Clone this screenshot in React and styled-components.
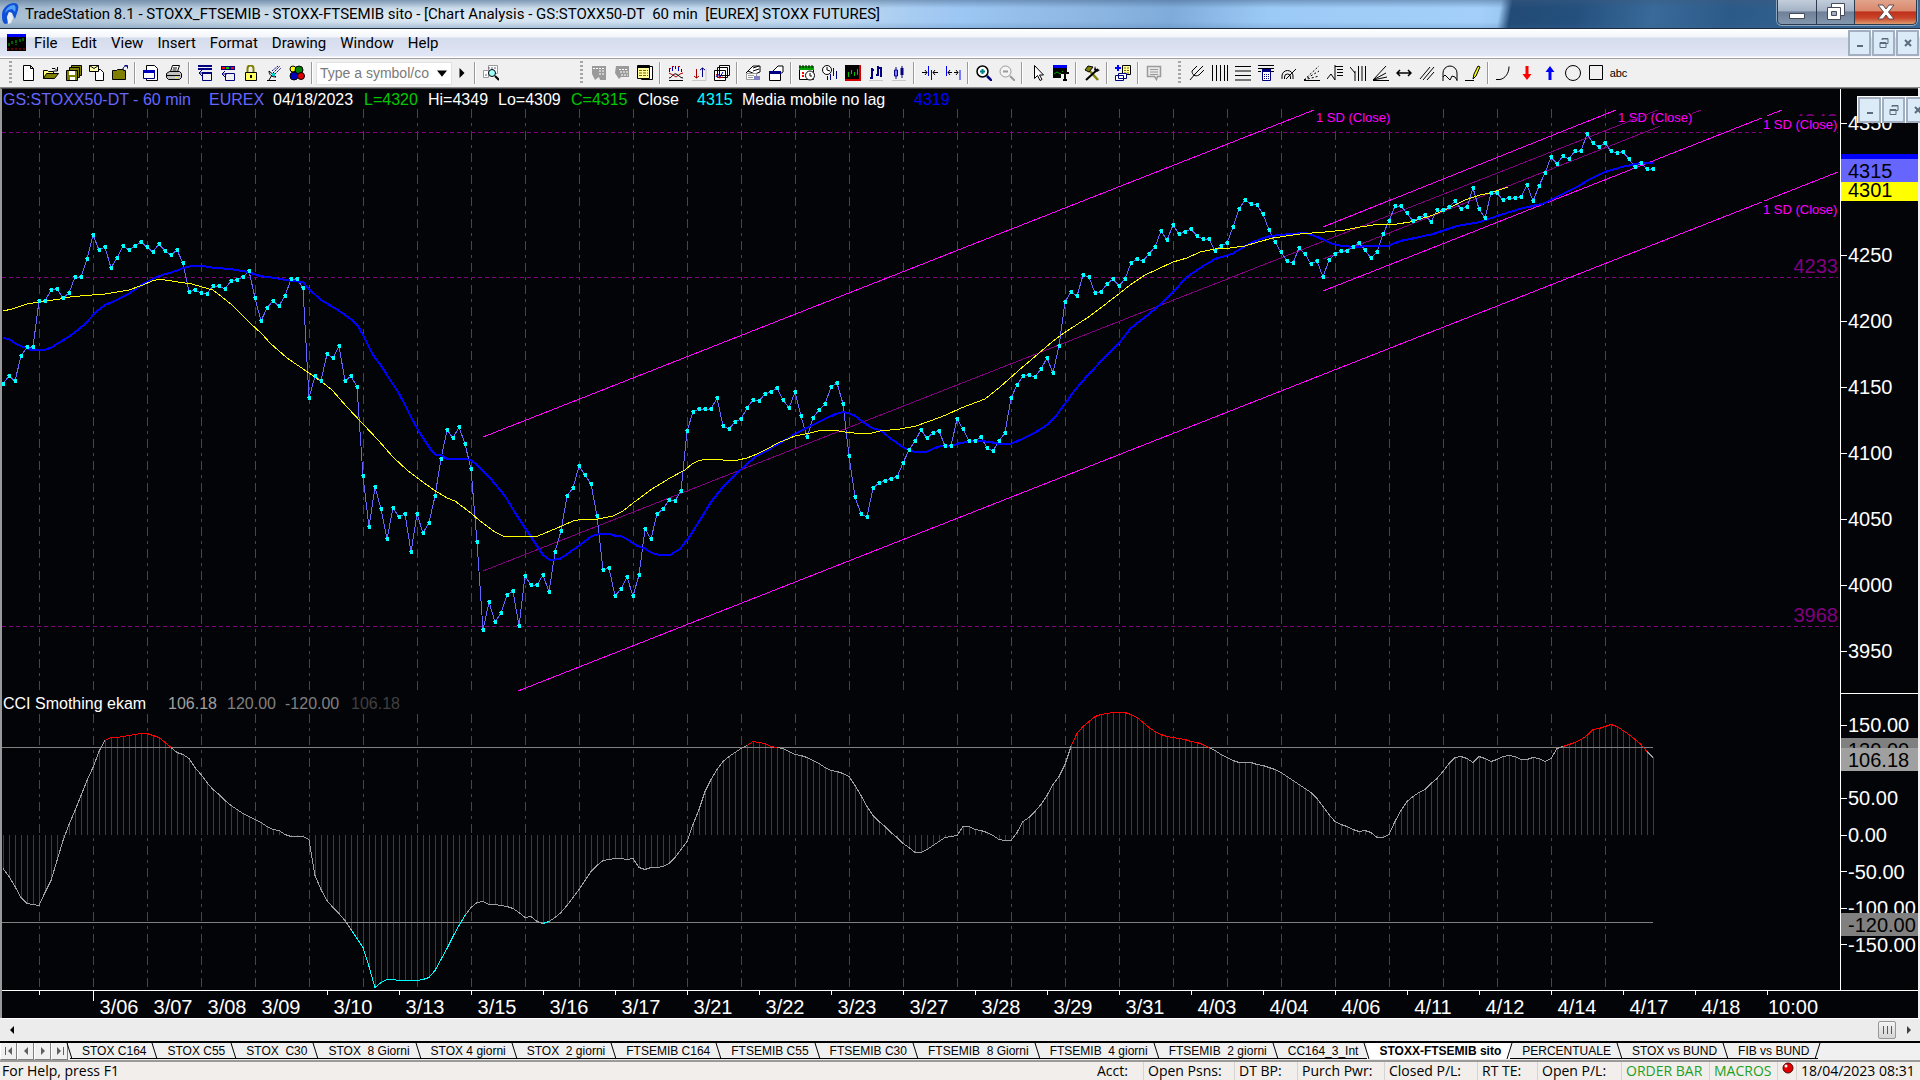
import React from "react";
import styled, { createGlobalStyle, css } from "styled-components";

const SANS = '"Liberation Sans", Arial, sans-serif';
const UI = '"Open Sans", "Segoe UI", sans-serif';
const CAPTION = 'Roboto, "Segoe UI", sans-serif';

const GlobalStyle = createGlobalStyle`
  *, *::before, *::after { box-sizing: border-box; }
  body { margin: 0; background: #f0f0f0; font-family: ${UI}; color: #000; }
  button, input { font: inherit; color: inherit; margin: 0; padding: 0; border: 0; background: none; border-radius: 0; }
  a { color: inherit; text-decoration: none; }
`;

/* ---------- window frame ---------- */

const Window = styled.div`
  min-height: 100vh;
  display: flex;
  flex-direction: column;
  overflow: hidden;
`;

const TitleBar = styled.header`
  height: 29px;
  display: flex;
  align-items: center;
  border-bottom: 1px solid #1d2b3c;
  background:
    linear-gradient(180deg, rgba(60, 90, 125, 0.45) 0, rgba(255, 255, 255, 0) 8px, rgba(255, 255, 255, 0) 22px, rgba(60, 100, 150, 0.2) 28px),
    radial-gradient(ellipse 460px 18px at 23% 60%, rgba(235, 243, 250, 0.85), rgba(235, 243, 250, 0)),
    linear-gradient(100deg, #a3bacf 0, #b4cbe0 26%, #b9d5ef 44%, #9cc6f3 50%, #8fb8e4 56%, #7fabda 61%, #9ccaf6 66%, #a3cffa 77%, #9cc8f4 78%, #224b76 78.6%, #24507e 82%, #396a9a 86%, #2c5a88 90%, #3d6a96 100%);
`;

const AppMark = styled.svg`
  width: 18px;
  height: 22px;
  margin-left: 1px;
  flex: none;
`;

const Title = styled.h1`
  margin: 0 auto 0 6px;
  font-family: ${CAPTION};
  font-size: 15px;
  font-weight: 400;
  line-height: 20px;
  white-space: pre;
`;

const FrameButtons = styled.div`
  align-self: flex-start;
  display: flex;
  margin-right: 3px;
  height: 25px;
  border: 1px solid #2a3b50;
  border-top: 0;
  border-radius: 0 0 5px 5px;
  overflow: hidden;
  box-shadow: 0 0 0 1px rgba(255, 255, 255, 0.45);
`;

const FrameButton = styled.button`
  width: ${(p) => (p.$close ? 62 : 38)}px;
  display: grid;
  place-items: center;
  border-left: ${(p) => (p.$first ? "0" : "1px solid #2a3b50")};
  background: ${(p) =>
    p.$close
      ? "linear-gradient(180deg, #e2a48c 0, #d9896c 45%, #c0301a 50%, #c9452a 75%, #dc9a6e 100%)"
      : "linear-gradient(180deg, #c3cedb 0, #a4b3c5 45%, #6f8098 50%, #8497ad 100%)"};
`;

const MenuBar = styled.nav`
  height: 30px;
  display: flex;
  align-items: center;
  padding: 0 1px 2px 7px;
  border-bottom: 1px solid #a0a0a0;
  background: linear-gradient(180deg, #ffffff 0, #f3f5fb 8px, #d5dcec 9px, #dce2f2 20px, #e2e7f6 27px, #fff 28px);
`;

const MenuItem = styled.button`
  padding: 0 7px;
  font-family: ${CAPTION};
  font-size: 15px;
  line-height: 22px;
`;

const MenuList = styled.div`
  display: flex;
  margin: 0 auto 0 1px;
`;

const MdiButtons = styled.div`
  display: flex;
  gap: 1px;
  ${(p) =>
    p.$floating &&
    css`
      position: absolute;
      top: 7px;
      left: 16px;
      padding: 1px 0 0 1px;
      background: #fff;
      z-index: 2;
    `}
`;

const MdiButton = styled.button`
  width: 23px;
  height: 26px;
  flex: none;
  display: grid;
  place-items: center;
  border: 2px solid #a3afc0;
  background: #dcebf8;
  color: #5b6b7b;
`;

/* ---------- toolbar ---------- */

const ToolBar = styled.div`
  height: 29px;
  display: flex;
  align-items: center;
  background: #f0f0f0;
  border-bottom: 1px solid #8a8a8a;
  overflow: hidden;
`;

const ToolGroup = styled.div`
  display: flex;
  align-items: center;
  flex: none;
  width: ${(p) => (p.$width ? p.$width + "px" : "auto")};
`;

const Grip = styled.span`
  width: 3px;
  height: 24px;
  margin: 0 4px 0 9px;
  background: repeating-linear-gradient(180deg, #a6a6a6 0 2px, transparent 2px 4px);
`;

const ToolButton = styled.button`
  width: 23px;
  height: 24px;
  display: grid;
  place-items: center;
  flex: none;
  svg { display: block; }
`;

const Divider = styled.span`
  width: 8px;
  height: 22px;
  flex: none;
  background: linear-gradient(90deg, transparent 3px, #9a9a9a 3px 4px, #fff 4px 5px, transparent 5px);
`;

const SymbolBox = styled.div`
  display: flex;
  align-items: center;
  width: 136px;
  height: 23px;
  padding-left: 3px;
  background: #fff;
  border: 1px solid #e2e2e2;
`;

const SymbolInput = styled.input`
  flex: 1;
  min-width: 0;
  height: 20px;
  font-family: ${SANS};
  font-size: 14px;
  outline: 0;
  &::placeholder { color: #7a7a7a; opacity: 1; }
`;

const ArrowButton = styled.button`
  width: 19px;
  height: 20px;
  display: grid;
  place-items: center;
`;

/* ---------- chart ---------- */

const ChartWindow = styled.main`
  position: relative;
  margin-right: 2px;
  border-left: 2px solid #9a9a9a;
  border-top: 1px solid #404040;
  background: #030408;
  font-family: ${SANS};
  color: #fff;
`;

const Pane = styled.section`
  position: relative;
  display: grid;
  grid-template-columns: minmax(0, 1fr) 78px;
`;

const Plot = styled.svg`
  display: block;
  width: 100%;
  height: auto;
  text { font-family: ${SANS}; }
`;

const Legend = styled.div`
  position: absolute;
  top: ${(p) => p.$top}px;
  left: 1px;
  display: grid;
  grid-template-columns: ${(p) => p.$columns};
  font-size: 16px;
  line-height: 20px;
  white-space: pre;
`;

const LegendItem = styled.span`
  color: ${(p) => p.$color};
`;

const Scale = styled.div`
  position: relative;
  display: flex;
  flex-direction: column;
  border-left: 1px solid #fff;
  border-top: ${(p) => (p.$ruled ? "1px solid #fff" : "0")};
  padding: ${(p) => p.$padding};
`;

const ScaleRow = styled.div`
  flex: 1;
  display: flex;
  align-items: center;
  font-size: 20px;
  line-height: 22px;
  white-space: nowrap;
  &::before {
    content: "";
    width: 6px;
    height: 1px;
    margin-right: 1px;
    background: #fff;
  }
`;

const PriceTag = styled.output`
  position: absolute;
  left: 0;
  right: 0;
  top: ${(p) => p.$top}px;
  height: 23px;
  padding-left: 7px;
  font-size: 20px;
  line-height: 24px;
  color: #000;
  white-space: nowrap;
  background: ${(p) => p.$color};
`;

/* ---------- bottom bars ---------- */

const ScrollTrack = styled.div`
  height: 23px;
  display: flex;
  align-items: center;
  justify-content: space-between;
  padding: 0 2px;
  border-top: 1px solid #fff;
  background: #ececec;
`;

const ScrollEnd = styled.div`
  display: flex;
  align-items: center;
  gap: 3px;
`;

const Thumb = styled.span`
  width: 18px;
  height: 18px;
  border: 1px solid #979797;
  border-radius: 2px;
  background: repeating-linear-gradient(90deg, #5a5a5a 0 1px, transparent 1px 4px) 4px 4px / 9px 8px no-repeat,
    linear-gradient(180deg, #f4f4f4, #d4d4d4);
`;

const TabStrip = styled.nav`
  height: 19px;
  display: flex;
  align-items: stretch;
  border-top: 2px solid #000;
  background: #f0f0f0;
`;

const TabNavGroup = styled.div`
  display: flex;
  padding-right: 2px;
`;

const TabNav = styled.button`
  width: 17px;
  display: grid;
  place-items: center;
  border-right: 1px solid #808080;
  border-bottom: 1px solid #808080;
  border-left: 1px solid #fff;
`;

const Tab = styled.button`
  height: 16px;
  padding: 0 9px 0 12px;
  font-family: ${SANS};
  font-size: 12px;
  line-height: 14px;
  font-weight: ${(p) => (p.$active ? 700 : 400)};
  white-space: pre;
  background: ${(p) => (p.$active ? "#fff" : "#f0f0f0")};
  border-bottom: 1px solid ${(p) => (p.$active ? "#fff" : "#000")};
`;

const TabEdge = styled.svg`
  width: 7px;
  height: 17px;
  margin: 0 -3px 0 -4px;
  z-index: 1;
  flex: none;
`;

const StatusBar = styled.footer`
  height: 20px;
  display: flex;
  align-items: stretch;
  border-top: 2px solid #9a9a9a;
  background: #f1eeec;
  font-size: 14px;
  line-height: 18px;
  white-space: nowrap;
`;

const StatusText = styled.span`
  margin-right: auto;
  padding-left: 2px;
`;

const StatusCell = styled.span`
  width: ${(p) => p.$width}px;
  padding-left: 4px;
  border-left: 1px solid ${(p) => (p.$open ? "transparent" : "#d6d3d0")};
  color: ${(p) => (p.$green ? "#1fa01f" : "#000")};
`;

const TaskEdge = styled.div`
  min-height: 2px;
  flex: 1;
  background: linear-gradient(90deg, #c3cbe0 0 212px, #3b2c48 212px 628px, #c3cbe0 628px);
`;

/* ---------- series ---------- */

const CLOSES = [
  384, 376, 381, 356, 347, 347, 301, 301, 290, 289, 298, 293, 277, 277, 259, 235, 250, 247, 268, 258, 246, 250, 246, 242,
  247, 252, 244, 251, 255, 250, 263, 292, 290, 293, 294, 286, 286, 289, 281, 280, 277, 271, 298, 321, 308, 301, 306, 296,
  279, 279, 288, 398, 376, 381, 354, 358, 346, 381, 376, 387, 476, 527, 487, 509, 539, 508, 517, 514, 552, 514, 533, 523,
  496, 459, 430, 438, 427, 444, 469, 542, 630, 602, 622, 613, 595, 591, 626, 576, 585, 585, 575, 592, 552, 531, 496, 488,
  466, 475, 484, 516, 570, 568, 596, 589, 577, 596, 575, 529, 539, 514, 509, 500, 501, 491, 431, 412, 409, 409, 409, 398,
  426, 429, 422, 419, 408, 400, 401, 394, 392, 388, 400, 408, 392, 416, 437, 418, 410, 404, 387, 383, 404, 456, 497, 514,
  517, 488, 483, 481, 479, 477, 463, 450, 441, 430, 438, 433, 431, 446, 446, 419, 429, 441, 441, 437, 448, 451, 441, 433,
  398, 385, 376, 375, 377, 369, 358, 373, 346, 302, 292, 296, 275, 277, 293, 292, 284, 279, 286, 279, 263, 259, 261, 254,
  247, 231, 240, 225, 234, 232, 229, 236, 239, 239, 251, 246, 243, 227, 209, 200, 204, 205, 214, 230, 242, 252, 261, 263,
  248, 254, 264, 261, 277, 260, 254, 251, 251, 247, 243, 250, 258, 252, 234, 221, 206, 206, 213, 221, 218, 215, 222, 210,
  210, 207, 201, 209, 207, 188, 209, 218, 193, 193, 200, 198, 198, 197, 185, 201, 186, 173, 157, 164, 156, 159, 151, 151,
  134, 143, 147, 143, 151, 153, 152, 159, 167, 163, 169, 169,
];

const FAST_AVERAGE =
  "3,338 9,339 16,344 26,348 32,350 45,350 52,347 70,336 84,325 97,311 105,305 117,300 130,293 143,284 159,276 176,271 186,267 192,266 203,266 215,268 230,269 248,272 260,276 275,278 292,281 303,282 309,289 321,300 338,310 352,320 358,326 363,335 373,355 382,367 390,380 397,390 404,403 411,417 418,430 425,441 431,450 436,455 441,455 447,459 465,459 471,460 477,465 490,478 505,496 514,511 525,528 535,543 543,555 550,560 560,559 570,552 580,545 592,536 600,534 610,534 616,536 621,536 627,539 637,546 644,548 652,553 660,555 670,555 680,549 690,536 700,520 711,502 722,488 737,473 755,457 775,446 795,434 813,425 827,418 838,413 844,412 854,415 863,422 872,428 880,430 890,438 904,448 914,452 926,452 940,446 952,446 960,443 975,441 981,441 990,442 1000,444 1011,444 1022,439 1036,432 1047,425 1056,416 1064,405 1075,390 1088,375 1105,357 1119,343 1131,328 1144,318 1162,303 1173,292 1187,277 1200,268 1215,259 1232,254 1247,245 1258,240 1270,236 1290,234 1305,233 1315,236 1324,240 1330,243 1342,246 1355,247 1370,246 1388,246 1400,241 1415,238 1433,234 1445,230 1457,226 1480,222 1500,215 1520,209 1545,203 1563,194 1577,187 1590,179 1605,172 1622,167 1640,163 1653,163";

const SLOW_AVERAGE =
  "3,311 12,309 27,304 40,302 60,299 70,297 80,296 105,294 129,290 143,285 152,281 160,279 165,280 178,282 192,284 209,289 213,290 222,297 232,305 250,323 262,334 270,343 287,358 309,373 322,382 332,390 347,407 363,424 378,440 393,457 407,470 420,480 434,490 447,498 455,501 463,507 471,513 480,521 495,532 503,536 525,537 538,536 550,531 562,526 573,521 583,519 598,519 613,516 623,511 633,503 652,489 670,478 685,470 692,464 698,461 706,459 715,459 723,460 738,460 747,458 757,454 767,449 778,443 795,436 810,433 822,430 832,430 845,432 863,434 872,433 880,431 900,429 916,426 930,421 946,415 961,408 985,399 1000,387 1018,371 1052,342 1064,333 1090,316 1107,303 1120,293 1130,285 1145,275 1158,269 1173,262 1187,258 1200,252 1215,249 1230,248 1245,246 1258,242 1273,238 1300,234 1325,232 1345,230 1360,227 1380,224 1397,224 1410,222 1420,219 1433,215 1445,210 1455,205 1465,200 1480,195 1490,193 1508,187";

const CCI_MARCH = [
  [5, 565], [18, 597], [35, 653], [45, 670], [64, 676], [70, 650], [84, 597], [100, 495], [113, 430], [125, 380], [140, 308],
  [153, 256], [162, 212], [172, 178], [182, 170], [202, 169], [212, 163], [222, 162], [234, 157], [245, 162], [260, 171],
  [270, 186], [280, 202], [290, 217], [300, 223], [309, 235], [318, 260], [330, 285], [345, 322], [358, 344], [380, 378],
  [400, 403], [418, 417], [440, 444], [455, 450], [465, 461], [475, 469], [495, 468], [505, 476], [515, 592], [525, 630],
  [535, 664], [555, 700], [567, 727], [575, 752], [585, 780], [594, 803], [613, 925], [623, 904], [633, 895], [652, 901],
  [682, 901], [702, 890], [712, 868], [722, 832], [740, 768], [757, 710], [770, 680], [778, 668], [788, 661], [798, 672],
  [815, 674], [832, 681], [845, 690], [858, 712], [868, 708], [878, 724], [888, 728], [898, 723], [920, 692], [945, 628],
  [968, 565], [985, 539], [1003, 535], [1020, 535], [1025, 539], [1035, 535], [1045, 565], [1055, 566], [1062, 562],
  [1078, 562], [1095, 547], [1110, 512], [1123, 480], [1130, 440], [1140, 395], [1152, 330], [1165, 285], [1180, 244],
  [1192, 225], [1203, 212], [1218, 198], [1232, 181], [1245, 187], [1258, 196], [1270, 201], [1280, 206], [1297, 220],
  [1315, 227], [1335, 248], [1360, 271], [1375, 277], [1387, 287], [1397, 315], [1408, 350], [1417, 382], [1427, 408],
  [1445, 436], [1460, 463], [1475, 490], [1485, 502], [1495, 516], [1505, 517], [1515, 505], [1530, 486], [1545, 468], [1562, 468],
];

const CCI_APRIL = [
  [0, 455], [5, 439], [15, 438], [25, 447], [40, 452], [50, 461], [62, 475], [72, 481], [84, 481], [93, 455], [103, 424],
  [115, 407], [133, 370], [143, 343], [153, 308], [163, 284], [172, 250], [181, 198], [192, 155], [205, 130], [222, 105],
  [245, 97], [275, 97], [285, 106], [300, 128], [315, 150], [335, 168], [350, 172], [365, 177], [378, 184], [390, 185],
  [400, 196], [415, 207], [430, 225], [445, 238], [457, 246], [475, 247], [500, 258], [515, 267], [530, 283], [550, 307],
  [575, 338], [590, 370], [600, 395], [613, 424], [630, 437], [652, 454], [663, 451], [672, 457], [682, 472], [692, 472],
  [701, 461], [715, 405], [731, 360], [742, 345], [757, 330], [780, 293], [795, 258], [809, 229], [820, 229], [830, 236],
  [838, 246], [848, 227], [858, 235], [868, 244], [888, 227], [903, 226], [917, 238], [927, 238], [937, 231], [948, 236],
  [957, 244], [967, 231], [976, 201], [990, 194], [1003, 187], [1017, 175], [1035, 146], [1045, 142], [1055, 139],
  [1065, 130], [1075, 139], [1095, 166], [1110, 188], [1122, 213], [1133, 232],
];

const barX = (i) => 3 + 6 * i;
const place = (points, start) => points.map(([x, y]) => [start + (x * 960) / 1568, 680 + y / 3]);
const CCI_PATH = [...place(CCI_MARCH, 0), ...place(CCI_APRIL, 960)];

const cciAt = (x) => {
  const next = CCI_PATH.findIndex((p) => p[0] >= x);
  if (next < 1) return CCI_PATH[next === 0 ? 0 : CCI_PATH.length - 1][1];
  const [x0, y0] = CCI_PATH[next - 1];
  const [x1, y1] = CCI_PATH[next];
  return y0 + ((x - x0) / (x1 - x0)) * (y1 - y0);
};

const CCI = CLOSES.map((_, i) => Math.round(cciAt(barX(i))));
const UPPER = 747;
const LOWER = 922;
const ZERO = 835;
const SESSIONS = Array.from({ length: 30 }, (_, i) => 39 + 54 * i);

const cciColor = (y) => (y < UPPER ? "#ff0000" : y > LOWER ? "#00ffff" : "#a0a0a0");

const SessionLines = ({ top, bottom }) => (
  <g stroke="#464648" strokeWidth="1" strokeDasharray="9 5 3 5">
    {SESSIONS.map((x) => (
      <line key={x} x1={x + 0.5} x2={x + 0.5} y1={top} y2={bottom} />
    ))}
  </g>
);

const DeviationLabel = ({ x, y }) => (
  <g>
    <rect x={x - 1} y={y - 14} width="75" height="17" fill="#030408" />
    <text x={x} y={y - 1} fontSize="13" fill="#ff00ff">1 SD (Close)</text>
  </g>
);

const PricePlot = () => (
  <Plot viewBox="2 89 1838 604" role="img" aria-label="GS:STOXX50-DT 60 min price">
    <g shapeRendering="crispEdges" fill="none">
      <SessionLines top={109} bottom={693} />
      <g stroke="#800080" strokeDasharray="4 3">
        <line x1="2" y1="132.5" x2="1838" y2="132.5" />
        <line x1="2" y1="277.5" x2="1838" y2="277.5" />
        <line x1="2" y1="626.5" x2="1838" y2="626.5" />
      </g>
      <line x1="1323" y1="259" x2="1701" y2="110" stroke="#800080" />
    </g>
    <g fill="#800080" fontSize="20" textAnchor="end">
      <text x="1838" y="128">4343</text>
      <text x="1838" y="273">4233</text>
      <text x="1838" y="622">3968</text>
    </g>
    <g shapeRendering="crispEdges" fill="none" stroke="#ff00ff">
      <line x1="483" y1="437" x2="1314" y2="110" />
      <line x1="518" y1="691" x2="1838" y2="172" />
      <line x1="1323" y1="227" x2="1616" y2="110" />
      <line x1="1323" y1="291" x2="1782" y2="110" />
    </g>
    <DeviationLabel x={1316} y={123} />
    <DeviationLabel x={1618} y={123} />
    <DeviationLabel x={1763} y={130} />
    <DeviationLabel x={1763} y={215} />
    <g shapeRendering="crispEdges" fill="none">
      <line x1="483" y1="571" x2="1658" y2="110" stroke="#800080" />
      <polyline points={CLOSES.map((y, i) => `${barX(i)},${y}`).join(" ")} stroke="#6666ff" />
      <polyline points={FAST_AVERAGE} stroke="#0000ff" strokeWidth="2" />
      <polyline points={SLOW_AVERAGE} stroke="#ffff00" />
      <path fill="#00ffff" d={CLOSES.map((y, i) => `M${barX(i) - 1} ${y - 2}h3v4h-3v-2h-1v-1h1z`).join("")} />
    </g>
  </Plot>
);

const CciPlot = () => (
  <Plot viewBox="2 693 1838 297" role="img" aria-label="CCI Smothing ekam">
    <g shapeRendering="crispEdges" fill="none">
      <SessionLines top={714} bottom={988} />
      <path stroke="#3c3c3e" d={CCI.map((y, i) => `M${barX(i) + 0.5} ${ZERO}V${y}`).join("")} />
      <path stroke="#808080" d={`M2 ${UPPER + 0.5}H1653M2 ${LOWER + 0.5}H1653`} />
      {CCI.slice(0, -1).map((y, i) => (
        <line key={i} x1={barX(i)} y1={y + 0.5} x2={barX(i + 1)} y2={CCI[i + 1] + 0.5} stroke={cciColor(y)} />
      ))}
    </g>
  </Plot>
);

const DAYS = [
  [93, "3/06"], [147, "3/07"], [201, "3/08"], [255, "3/09"],
  ...["3/10", "3/13", "3/15", "3/16", "3/17", "3/21", "3/22", "3/23", "3/27", "3/28", "3/29", "3/31", "4/03", "4/04", "4/06", "4/11", "4/12", "4/14", "4/17", "4/18", "10:00"].map(
    (label, i) => [327 + 72 * i, label]
  ),
];

const TimePlot = () => (
  <Plot viewBox="2 990 1916 28" role="img" aria-label="Dates">
    <g shapeRendering="crispEdges" fill="#fff">
      <rect x="2" y="990" width="1916" height="1" />
      <rect x="39" y="990" width="1" height="5" />
      <rect x="93" y="990" width="1" height="11" />
      {DAYS.slice(4).map(([x]) => (
        <rect key={x} x={x} y="990" width="1" height="5" />
      ))}
    </g>
    <g fill="#fff" fontSize="20" textAnchor="middle">
      {DAYS.map(([x, label]) => (
        <text key={x} x={x + 26} y="1014">{label}</text>
      ))}
    </g>
  </Plot>
);

/* ---------- icons ---------- */

const K = "#000";
const N = "#000080";
const G = "#9a9a9a";

const ICONS = {
  new: <path d="M3.5.5h7l3 3v12h-10zM10.5.5v3h3" fill="#fff" stroke={K} />,
  open: <><path d="M.5 13.5v-8h4l1 1h5v3" fill="#ffff80" stroke={K} /><path d="M.5 13.5l3-5h12l-4 5z" fill="#808000" stroke={K} /><path d="M9 3.5h3l2 2M14.5 2v4h-4" fill="none" stroke={K} /></>,
  saveAll: <><path d="M5.5.5h10v10h-10z" fill="#808000" stroke={K} /><path d="M3.5 2.5h10v10h-10z" fill="#808000" stroke={K} /><path d="M.5 5.5h11v10h-11z" fill="#808000" stroke={K} /><path d="M3 6h6v4H3zM4 12h5v3H4z" fill="#fff" /></>,
  mailDoc: <><path d="M6.5 4.5h5l3 3v8h-8z" fill="#fff" stroke={K} /><path d="M.5.5h9v6h-9z" fill="#ffffb0" stroke={K} /><path d="M.5.5l4.5 3 4.5-3" fill="none" stroke={K} /></>,
  closeDir: <><path d="M.5 14.5v-9h4l1-1h6v1h2v9z" fill="#808000" stroke={K} /><path d="M11 4c0-2 2-3 4-3M12.5.5h3v3" fill="none" stroke={N} /></>,
  window: <><path d="M3.5.5h8l3 3v12h-11z" fill="#fff" stroke={K} /><path d="M.5 5.5h11v8H.5z" fill="#fff" stroke={N} /><path d="M0 5h12v3H0z" fill="#0000c0" /></>,
  print: <><path d="M4.5 6.5l2-6h7l-2 6" fill="#fff" stroke={K} /><path d="M.5 8.5l3-2h10l2 2v4l-2 2h-11l-2-2z" fill="#c0c0c0" stroke={K} /><path d="M1 10.5h13M7 3h4M6.5 5h4" stroke={K} /><path d="M9 12h3v1H9z" fill="#ffff00" /></>,
  rows: <><path d="M1 1h14M1 4h14" stroke={N} strokeWidth="2" /><path d="M5.5 7.5h9v8h-9zM2 8h5M2 8l3-3M2 8l3 3" fill="none" stroke={N} /><path d="M5 7h10v2H5z" fill={N} /></>,
  rowsColor: <><path d="M1 1h14v4H1z" fill={N} /><path d="M2 2h3v2H2z" fill="#f00" /><path d="M6 2h3v2H6z" fill="#0c0" /><path d="M11 2h3v2h-3z" fill="#f00" /><path d="M5.5 8.5h9v7h-9zM2 9h5M2 9l3-3M2 9l3 3" fill="none" stroke={N} /></>,
  lock: <><path d="M4.5 7V3.5a3 3 0 0 1 6 0V7" fill="none" stroke="#808000" strokeWidth="2" /><path d="M2.5 7.5h11v8h-11z" fill="#ffff60" stroke={K} /><path d="M7 10h2v3H7z" fill={K} /></>,
  satellite: <><path d="M3 6c0 4 3 6 7 6zM1 15.5h9M3 15l3-5" fill="#e0e0e0" stroke={K} /><path d="M7 8l7-7M9 9l6-6M6 6l6-5" stroke={N} strokeDasharray="2 1" /><path d="M6 8h3v3H6z" fill="#0cc" /></>,
  balls: <><circle cx="4" cy="4" r="3" fill="#ffff00" stroke={K} /><circle cx="10" cy="5" r="4" fill="#008000" stroke={K} /><circle cx="5" cy="11" r="4" fill="#0000c0" stroke={K} /><circle cx="12" cy="11" r="3.5" fill="#e00000" stroke={K} /></>,
  find: <><path d="M.5 5.5h5v7h-5zM5.5.5h9v8h-9z" fill="#fff" stroke={G} /><path d="M5 3h9M2 10h3" stroke="#606080" strokeDasharray="2 1" /><circle cx="9" cy="8" r="3.5" fill="#a0ffff" stroke={K} /><path d="M12 11l4 4" stroke={K} strokeWidth="2" /></>,
  grayMoney: <><path d="M1 1h14v14H9l-1-3-4 3-3-6z" fill={G} /><path d="M2 3.5h11M8 6h5M8 9h5" stroke="#fff" strokeDasharray="2 1" /></>,
  grayTable: <><path d="M2 1h13v11H7l-2 2-4-6z" fill={G} /><path d="M5 4.5h9M6 7h8M7 10h7" stroke="#fff" strokeDasharray="2 1" /></>,
  bookTable: <><path d="M4.5 1.5h11v13h-11z" fill="#fff" stroke={K} /><path d="M.5.5h12v13H.5z" fill="#ffffa0" stroke={K} /><path d="M.5 1.5h12v1H.5z" stroke={K} /><path d="M2 5.5h9M2 8h9M2 10.5h9" stroke="#806000" strokeDasharray="3 1" /></>,
  wave: <><path d="M1.5 4v3M4.5 2v4M7.5 1v3M10.5 2v4M13.5 4v3" stroke="#0000c0" /><path d="M1 3.5h2M4 1.5h2M10 1.5h2" stroke="#c00000" /><path d="M1 8l4 2 3 2 4-3 3-1" fill="none" stroke="#c00000" /><path d="M1 13c3 0 4-5 7-4s4 4 7 4M1 15.5h14" fill="none" stroke={K} /></>,
  updown: <><path d="M5.5 4v9M3 11l2.5 2L8 11" fill="none" stroke="#a00000" /><path d="M11.5 12V3M9 5l2.5-2L14 5" fill="none" stroke={N} /><path d="M1 15.5h14V4" fill="none" stroke="#c8c8c8" /></>,
  charts: <><path d="M5.5.5h10v10h-10zM3.5 2.5h10v10h-10zM.5 5.5h11v10H.5z" fill="#fff" stroke={K} /><path d="M2 12l2-3 2 3 3-5" fill="none" stroke="#0000c0" /><path d="M2 9l3 4 4-1" fill="none" stroke="#c00000" /></>,
  handDoc: <><path d="M3 6l5-5h7v6l-5 2z" fill="#fff" stroke={K} /><path d="M1 8l7-7M8 3l6-2M8 6l6-2" stroke={K} /><path d="M1.5 8.5h10v6h-10z" fill="#fff" stroke={G} /><path d="M3 10.500h6M3 12.500h5" stroke={G} /><path d="M9 11h6v4H9z" fill="#8080c0" /></>,
  handWin: <><path d="M5 6l5-5h5v6l-3 2z" fill="#fff" stroke={K} /><path d="M1.5 6.5h11v9h-11z" fill="#fff" stroke={K} /><path d="M1 6h12v3H1z" fill={N} /></>,
  clockCal: <><path d="M.5 1.5h14v13H.5z" fill="#fff" stroke={K} /><path d="M0 1h15v4H0z" fill="#00a000" /><path d="M1 0v3M4 0v3M7 0v3M10 0v3M13 0v3" stroke={K} /><path d="M3 8h2M3 11h2" stroke="#f00" strokeWidth="2" /><circle cx="11" cy="10.5" r="4.5" fill="#fff" stroke={K} /><path d="M11 8v3h2" fill="none" stroke={K} /></>,
  clockBars: <><circle cx="5" cy="5" r="4.5" fill="#fff" stroke={K} /><path d="M5 2v3l3 1" fill="none" stroke={K} /><path d="M5.5 11v4M8.500 9v6M11.5 3v8M14.500 6v8" stroke={N} /></>,
  chartDark: <><path d="M0 0h16v16H0z" fill="#d00000" /><path d="M0 0h14v14H0z" fill={K} /><path d="M3.5 7v5M6.500 5v4M9.5 7v4M12.500 4v6" stroke="#00c000" /></>,
  bars: <><path d="M4 3v11M2 13h2M4 5h2M10 1v10M8 10h2M10 3h4M13 3v9" stroke={N} strokeWidth="2" fill="none" /><path d="M1 15.5h14" stroke="#c8c8c8" /></>,
  candles: <><path d="M5 2v12M11 1v12" stroke={N} /><path d="M3.5 5h3v6h-3z" fill="#8080ff" stroke={N} /><path d="M9.5 3h3v7h-3z" fill={N} /><path d="M1 15.5h14" stroke="#c8c8c8" /></>,
  squeeze: <><path d="M0 7.5h5M3 5l2 2.5L3 10M16 7.5h-5M13 5l-2 2.5 2 2.5" fill="none" stroke={K} /><path d="M6.5 1v10M9.5 5v10" stroke="#0000ff" /></>,
  spread: <><path d="M1.5 1v10M15 5v10" stroke="#0000ff" /><path d="M3 7.5h4M5 5L3 7.500 5 10M9 7.5h4M11 5l2 2.5-2 2.5" fill="none" stroke={K} /></>,
  zoomIn: <><circle cx="6.5" cy="6.5" r="5.5" fill="#fff" stroke={K} strokeWidth="1.500" /><path d="M4 6.5h5M6.5 4v5" stroke="#008080" strokeWidth="2" /><path d="M11 11l5 5" stroke={N} strokeWidth="2.500" /></>,
  zoomOut: <><circle cx="6.5" cy="6.5" r="5.5" fill="#f4f4f4" stroke={G} /><path d="M4 6.5h5M11 11l5 5" stroke={G} strokeWidth="2" /></>,
  pointer: <path d="M4.500.5v13l3-3 2.5 5 2-1-2.5-4.500h4z" fill="#fff" stroke={K} />,
  chartText: <><path d="M0 0h14v13H0z" fill={K} /><path d="M0 0h14v3H0z" fill="#0000ff" /><path d="M1 9l3-2 3 2 3-3" fill="none" stroke="#0a0" /><path d="M8 7h8v9H8z" fill="#f0f0f0" /><path d="M8 8h8M12 8v7M10 15h4" stroke={K} strokeWidth="2" /></>,
  tools: <><path d="M3 3l11 12" stroke="#808000" strokeWidth="2.500" /><path d="M14 4L2 15" stroke={K} strokeWidth="2" /><path d="M1 5l3-4 5 1-4 5z" fill="#808000" stroke={K} /><path d="M11 1l1 3 4 1-3 2-3-2z" fill={K} /></>,
  addWin: <><path d="M7.500.5h8v9h-8z" fill="#ffffa0" stroke={K} /><path d="M9 3h5M9 5.5h5M9 8h5" stroke="#806000" strokeDasharray="2 1" /><path d="M0 3h6M3 0v6" stroke="#0000ff" strokeWidth="2" /><path d="M3.5 8.5h8v5h-8zM.5 10.5h8v5h-8z" fill="#fff" stroke={N} /></>,
  note: <><path d="M1.5 1.5h13v10h-3l-1 3-2-3h-7z" fill="#e8e8e8" stroke={G} strokeWidth="1.500" /><path d="M4 4.5h8M4 7h8M4 9.5h8" stroke={G} /></>,
  fork: <path d="M1 15l5-6M3 6c0 4 3 6 7 4M6 9l8-8M3 6l5-5M10 10l5-5" fill="none" stroke={K} />,
  vlines: <path d="M.5 0v16M4.5 0v16M8.5 0v16M12.5 0v16M15.5 0v16" stroke={K} />,
  hlines: <path d="M0 1.5h16M0 6h16M0 10.5h16M0 15h16" stroke={K} />,
  calcLines: <><path d="M0 .5h16M0 3.5h16M0 6.5h3M13 6.5h3" stroke={K} /><path d="M4.5 5.5h8v10h-8z" fill="#fff" stroke={N} /><path d="M4 4h9v3H4z" fill={N} /><path d="M6 9.5h5M6 11.5h5M6 13.5h5" stroke={N} strokeDasharray="1 1" /></>,
  arcs: <path d="M1 14V11a5.500 5.500 0 0 1 11 0v3M3.5 14v-2a3 3 0 0 1 6 0v2M5 14L15 4" fill="none" stroke={K} />,
  fanDots: <><path d="M0 15.5h16" stroke={K} /><path d="M0 15L15 1M0 15l15-9M0 15l15-4" stroke={K} strokeDasharray="2 2" /></>,
  steps: <path d="M0 14l4-5 4 6V0M8 1.5h8M10 4.5h6M10 7.5h6M10 10.5h6" fill="none" stroke={K} />,
  fanTime: <path d="M0 2l5 6v8M5 8V6M8.5 1v15M12 1v15M15.5 1v15" fill="none" stroke={K} />,
  fan: <path d="M0 15.5h16M0 15L13 1M0 15l13-7M0 15l14-3" fill="none" stroke={K} />,
  hArrow: <path d="M1 8h14M4 5L1 8l3 3M12 5l3 3-3 3" fill="none" stroke={K} strokeWidth="1.500" />,
  parallel: <path d="M1 14L11 2M4 15L15 2M8 15l7-8" stroke={K} />,
  cycles: <path d="M1 16V8a7 7 0 0 1 14 0v8M1 12l2-2 2 2 3 3 2-4 3 1 2 3" fill="none" stroke={K} />,
  pencil: <><path d="M0 15.5h9" stroke={K} /><path d="M8 14l1-5 4-8 2 1-4 9z" fill="#ffff00" stroke={K} /></>,
  curve: <path d="M0 14.5h4c5-1 9-6 9-13" fill="none" stroke={K} />,
  down: <path d="M6.5 1h3v8h3L8 15 3.5 9h3z" fill="#ff0000" />,
  up: <path d="M6.5 15h3V7h3L8 1 3.5 7h3z" fill="#0000ff" />,
  ellipse: <circle cx="8" cy="8" r="7.500" fill="none" stroke={K} />,
  rect: <path d="M1.500.5h13v14h-13z" fill="none" stroke={K} />,
};

const Glyph = ({ name }) => (
  <svg width="16" height="16" viewBox="0 0 16 16">{ICONS[name]}</svg>
);

const Caret = ({ d, size = 8, color = "#000" }) => (
  <svg width={size} height={size} viewBox="0 0 8 8"><path d={d} fill={color} /></svg>
);

const LEFT = "M6 0v8L2 4z";
const RIGHT = "M2 0v8l4-4z";

const renderTools = (names) =>
  names.map((name, i) =>
    name === "|" ? (
      <Divider key={i} />
    ) : (
      <ToolButton key={i} type="button" aria-label={name}>
        <Glyph name={name} />
      </ToolButton>
    )
  );

const FILE_TOOLS = ["new", "open", "saveAll", "mailDoc", "closeDir", "|", "window", "print", "|", "rows", "rowsColor", "lock", "satellite", "balls", "|"];
const CHART_TOOLS = ["grayMoney", "grayTable", "bookTable", "|", "wave", "updown", "charts", "|", "handDoc", "handWin", "|", "clockCal", "clockBars", "chartDark", "bars", "candles", "|", "squeeze", "spread", "|", "zoomIn", "zoomOut", "|", "pointer", "chartText", "|", "tools", "|", "addWin", "|", "note"];
const DRAW_TOOLS = ["fork", "vlines", "hlines", "calcLines", "arcs", "fanDots", "steps", "fanTime", "fan", "hArrow", "parallel", "cycles", "pencil", "|", "curve", "down", "up", "ellipse", "rect"];

const TextTool = styled(ToolButton)`
  font-family: ${SANS};
  font-size: 11px;
`;

const MENUS = ["File", "Edit", "View", "Insert", "Format", "Drawing", "Window", "Help"];

const TABS = ["STOX C164", "STOX C55", "STOX  C30", "STOX  8 Giorni", "STOX 4 giorni", "STOX  2 giorni", "FTSEMIB C164", "FTSEMIB C55", "FTSEMIB C30", "FTSEMIB  8 Giorni", "FTSEMIB  4 giorni", "FTSEMIB  2 giorni", "CC164_3_Int", "STOXX-FTSEMIB sito", "PERCENTUALE", "STOX vs BUND", "FIB vs BUND"];
const ACTIVE_TAB = 13;

const STATUS = [["Acct:", 51, true], ["Open Psns:", 91], ["DT BP:", 63], ["Purch Pwr:", 87], ["Closed P/L:", 93], ["RT TE:", 60], ["Open P/L:", 84]];

const ChildControls = ({ floating }) => (
  <MdiButtons $floating={floating}>
    <MdiButton type="button" aria-label="Minimize chart">
      <svg width="12" height="12"><path d="M3 9h6" stroke="currentColor" strokeWidth="2" /></svg>
    </MdiButton>
    <MdiButton type="button" aria-label="Restore chart">
      <svg width="12" height="12"><path d="M4 3V1.500h6v5H8M4 2h6M2 5.500h6v5H2zM2 6.500h6" fill="none" stroke="currentColor" /></svg>
    </MdiButton>
    <MdiButton type="button" aria-label="Close chart">
      <svg width="12" height="12"><path d="M3 3l6 6M9 3l-6 6" stroke="currentColor" strokeWidth="2" /></svg>
    </MdiButton>
  </MdiButtons>
);

export default function App() {
  return (
    <Window>
      <GlobalStyle />
      <TitleBar>
        <AppMark viewBox="0 0 18 22">
          <path d="M1 12C1 5 7 0 13 0c4 0 5 3 4 7l-3 9-3-6-3-1-2 5 2 6-4 1C1 19 1 15 1 12z" fill="#1050d8" />
          <path d="M4 10c1-5 5-8 9-8 2 1 2 4 1 7l-3-3-4 1z" fill="#50a0f8" />
          <path d="M7 21l-1-7 2-5 3 1 1 5-2 5z" fill="#e8ecf4" />
        </AppMark>
        <Title>{"TradeStation 8.1 - STOXX_FTSEMIB - STOXX-FTSEMIB sito - [Chart Analysis - GS:STOXX50-DT  60 min  [EUREX] STOXX FUTURES]"}</Title>
        <FrameButtons>
          <FrameButton type="button" aria-label="Minimize" $first>
            <svg width="20" height="20"><path d="M2.500 11.500h15v5h-15z" fill="#fff" stroke="#444a58" /></svg>
          </FrameButton>
          <FrameButton type="button" aria-label="Restore">
            <svg width="20" height="20"><path d="M5.500 1.500h13v12h-13z" fill="#fff" stroke="#444a58" /><path d="M1.500 5.500h13v12h-13z" fill="#fff" stroke="#444a58" /><path d="M5.500 9.500h5v4h-5z" fill="#9fb0c4" stroke="#444a58" /></svg>
          </FrameButton>
          <FrameButton type="button" aria-label="Close" $close>
            <svg width="20" height="20"><path d="M2 3h5l3 4 3-4h5l-5.500 7L18 17h-5l-3-4-3 4H2l5.500-7z" fill="#fff" stroke="#5a4a50" /></svg>
          </FrameButton>
        </FrameButtons>
      </TitleBar>

      <MenuBar>
        <svg width="19" height="17"><path d="M0 0h19v17H0z" fill="#000" /><path d="M0 0h19v3H0z" fill="#0000ff" /><path d="M2 9v4M5 7v4M9 6v5M13 5v4M16 4v4" stroke="#00c000" strokeDasharray="3 1" /><path d="M0 15h19" stroke="#c00000" strokeDasharray="2 2" /></svg>
        <MenuList>
          {MENUS.map((m) => <MenuItem key={m} type="button">{m}</MenuItem>)}
        </MenuList>
        <ChildControls />
      </MenuBar>

      <ToolBar>
        <ToolGroup $width={571}>
          <Grip />
          {renderTools(FILE_TOOLS)}
          <SymbolBox>
            <SymbolInput aria-label="Symbol" placeholder="Type a symbol/co" />
            <ArrowButton type="button" aria-label="Symbol list"><Caret d="M0 2h8L4 7z" size={10} /></ArrowButton>
          </SymbolBox>
          <ArrowButton type="button" aria-label="Go"><Caret d={RIGHT} size={10} /></ArrowButton>
          <Divider />
          <ToolButton type="button" aria-label="find"><Glyph name="find" /></ToolButton>
        </ToolGroup>
        <ToolGroup $width={598}>
          <Grip />
          {renderTools(CHART_TOOLS)}
        </ToolGroup>
        <ToolGroup>
          <Grip />
          {renderTools(DRAW_TOOLS)}
          <TextTool type="button">abc</TextTool>
        </ToolGroup>
      </ToolBar>

      <ChartWindow>
        <Pane>
          <PricePlot />
          <Scale $padding="1px 0 9px">
            {["4350", "4300", "4250", "4200", "4150", "4100", "4050", "4000", "3950"].map((v) => <ScaleRow key={v}>{v}</ScaleRow>)}
            <PriceTag $top={65} $color="#0000ff">4319</PriceTag>
            <PriceTag $top={89} $color="#ffff00">4301</PriceTag>
            <PriceTag $top={70} $color="#6666ff">4315</PriceTag>
            <ChildControls floating />
          </Scale>
          <Legend $top={1} $columns="206px 64px 91px 64px 70px 73px 67px 59px 45px 172px auto">
            <LegendItem $color="#6666ff">GS:STOXX50-DT - 60 min</LegendItem>
            <LegendItem $color="#6666ff">EUREX</LegendItem>
            <LegendItem $color="#fff">04/18/2023</LegendItem>
            <LegendItem $color="#00c800">L=4320</LegendItem>
            <LegendItem $color="#fff">Hi=4349</LegendItem>
            <LegendItem $color="#fff">Lo=4309</LegendItem>
            <LegendItem $color="#00c800">C=4315</LegendItem>
            <LegendItem $color="#fff">Close</LegendItem>
            <LegendItem $color="#00ffff">4315</LegendItem>
            <LegendItem $color="#fff">Media mobile no lag</LegendItem>
            <LegendItem $color="#0000ff">4319</LegendItem>
          </Legend>
        </Pane>
        <Pane>
          <CciPlot />
          <Scale $ruled $padding="13px 0 27px">
            {["150.00", "100.00", "50.00", "0.00", "-50.00", "-100.00", "-150.00"].map((v) => <ScaleRow key={v}>{v}</ScaleRow>)}
            <PriceTag $top={44} $color="#808080">120.00</PriceTag>
            <PriceTag $top={54} $color="#a0a0a0">106.18</PriceTag>
            <PriceTag $top={219} $color="#808080">-120.00</PriceTag>
          </Scale>
          <Legend $top={1} $columns="165px 59px 58px 66px auto">
            <LegendItem $color="#fff">CCI Smothing ekam</LegendItem>
            <LegendItem $color="#a0a0a0">106.18</LegendItem>
            <LegendItem $color="#808080">120.00</LegendItem>
            <LegendItem $color="#808080">-120.00</LegendItem>
            <LegendItem $color="#404040">106.18</LegendItem>
          </Legend>
        </Pane>
        <TimePlot />
      </ChartWindow>

      <ScrollTrack>
        <ArrowButton type="button" aria-label="Scroll left"><Caret d={LEFT} /></ArrowButton>
        <ScrollEnd>
          <Thumb />
          <ArrowButton type="button" aria-label="Scroll right"><Caret d={RIGHT} color="#404040" /></ArrowButton>
        </ScrollEnd>
      </ScrollTrack>

      <TabStrip>
        <TabNavGroup>
          {["M0 0h1v8H0zM7 0v8L3 4z", LEFT, RIGHT, "M1 0v8l4-4zM7 0h1v8H7z"].map((d) => (
            <TabNav key={d} type="button" aria-label="Scroll tabs"><Caret d={d} color="#606060" /></TabNav>
          ))}
        </TabNavGroup>
        <TabEdge><path d="M1 0l5 16" stroke="#000" /></TabEdge>
        {TABS.map((t, i) => (
          <React.Fragment key={t}>
            <Tab type="button" $active={i === ACTIVE_TAB}>{t}</Tab>
            <TabEdge><path d={i === ACTIVE_TAB || i === TABS.length - 1 ? "M6 0L1 16" : "M1 0l5 16"} stroke="#000" /></TabEdge>
          </React.Fragment>
        ))}
      </TabStrip>

      <StatusBar>
        <StatusText>For Help, press F1</StatusText>
        {STATUS.map(([label, width, open]) => <StatusCell key={label} $width={width} $open={open}>{label}</StatusCell>)}
        <StatusCell $width={88} $green>ORDER BAR</StatusCell>
        <StatusCell $width={68} $green>MACROS</StatusCell>
        <StatusCell $width={19}>
          <svg width="12" height="16"><circle cx="6" cy="6" r="5" fill="#e00000" stroke="#500" /><circle cx="4" cy="4" r="1.500" fill="#fff" /></svg>
        </StatusCell>
        <StatusCell $width={124}>18/04/2023 08:31</StatusCell>
      </StatusBar>
      <TaskEdge />
    </Window>
  );
}
